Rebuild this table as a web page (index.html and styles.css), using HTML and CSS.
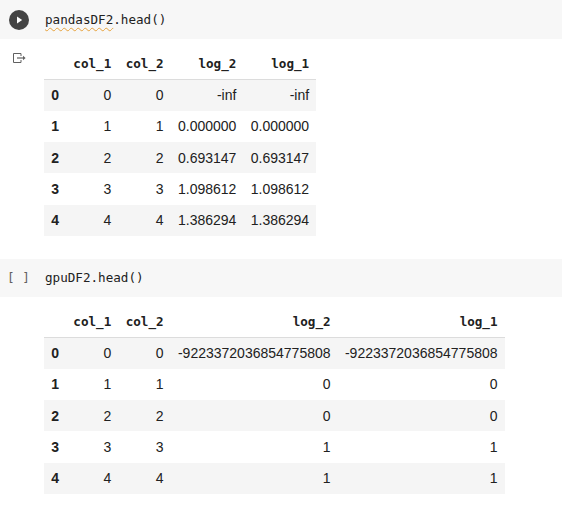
FILE: index.html
```html
<!DOCTYPE html>
<html>
<head>
<meta charset="utf-8">
<link rel="stylesheet" href="styles.css">
</head>
<body>
<div class="cell cell-first">
  <div class="gutter">
    <svg class="run" width="20" height="20" viewBox="0 0 20 20"><circle cx="10" cy="10" r="10" fill="#444"/><path d="M8 6.4 L13.2 10 L8 13.6 Z" fill="#fff"/></svg>
  </div>
  <div class="code"><span class="squiggle">pandasDF2</span>.head()</div>
</div>
<div class="output out-first">
  <div class="out-gutter">
    <svg class="out-icon" width="14" height="11" viewBox="0 0 14 11"><path d="M8 3 V0.5 H0.5 V9.5 H8 V7" fill="none" stroke="#616161" stroke-width="1"/><path d="M4 5 H10" stroke="#616161" stroke-width="1.2"/><path d="M10 2.8 L12.6 5 L10 7.2 Z" fill="#616161"/></svg>
  </div>
  <table class="df">
    <thead>
      <tr><th></th><th>col_1</th><th>col_2</th><th>log_2</th><th>log_1</th></tr>
    </thead>
    <tbody>
      <tr><th>0</th><td>0</td><td>0</td><td>-inf</td><td>-inf</td></tr>
      <tr><th>1</th><td>1</td><td>1</td><td>0.000000</td><td>0.000000</td></tr>
      <tr><th>2</th><td>2</td><td>2</td><td>0.693147</td><td>0.693147</td></tr>
      <tr><th>3</th><td>3</td><td>3</td><td>1.098612</td><td>1.098612</td></tr>
      <tr><th>4</th><td>4</td><td>4</td><td>1.386294</td><td>1.386294</td></tr>
    </tbody>
  </table>
</div>
<div class="cell cell-second">
  <div class="gutter"><span class="brackets">[ ]</span></div>
  <div class="code">gpuDF2.head()</div>
</div>
<div class="output">
  <div class="out-gutter"></div>
  <table class="df">
    <thead>
      <tr><th></th><th>col_1</th><th>col_2</th><th>log_2</th><th>log_1</th></tr>
    </thead>
    <tbody>
      <tr><th>0</th><td>0</td><td>0</td><td>-9223372036854775808</td><td>-9223372036854775808</td></tr>
      <tr><th>1</th><td>1</td><td>1</td><td>0</td><td>0</td></tr>
      <tr><th>2</th><td>2</td><td>2</td><td>0</td><td>0</td></tr>
      <tr><th>3</th><td>3</td><td>3</td><td>1</td><td>1</td></tr>
      <tr><th>4</th><td>4</td><td>4</td><td>1</td><td>1</td></tr>
    </tbody>
  </table>
</div>
</body>
</html>
```
FILE: styles.css
```css
html, body {
  margin: 0;
  padding: 0;
  background: #fff;
}
body {
  width: 562px;
  font-family: "Liberation Sans", Arial, sans-serif;
  color: #212121;
}
.cell {
  display: flex;
  align-items: center;
  background: #f7f7f7;
}
.cell-first {
  height: 39px;
}
.cell-second {
  height: 38px;
  margin-top: 23px;
}
.gutter {
  width: 45px;
  flex: none;
  display: flex;
  align-items: center;
}
.run {
  display: block;
  margin-left: 9px;
  margin-top: 1px;
}
.brackets {
  font-family: "DejaVu Sans Mono", monospace;
  font-size: 12.6px;
  color: #616161;
  margin-left: 7px;
  margin-top: -1px;
}
.code {
  font-family: "DejaVu Sans Mono", monospace;
  font-size: 12.6px;
  color: #212121;
}
.squiggle {
  text-decoration: underline wavy #e6a23c;
  text-decoration-thickness: 1px;
  text-underline-offset: 3px;
}
.output {
  display: flex;
  margin-top: 9px;
}
.out-gutter {
  width: 44px;
  flex: none;
}
.out-icon {
  display: block;
  margin: 5px 0 0 13px;
}
.df {
  border-collapse: collapse;
  font-size: 14px;
  color: #212121;
}
.df th, .df td {
  padding: 0 7.2px;
  text-align: right;
  white-space: nowrap;
}
.df thead th {
  height: 31px;
  font-family: "DejaVu Sans Mono", monospace;
  font-size: 12.6px;
  font-weight: bold;
  border-bottom: 1px solid #dcdcdc;
  vertical-align: middle;
}
.df tbody tr {
  height: 31.3px;
}
.df tbody tr:nth-child(odd) {
  background: #f5f5f5;
}
.df tbody th {
  font-weight: bold;
  text-align: left;
}
```
